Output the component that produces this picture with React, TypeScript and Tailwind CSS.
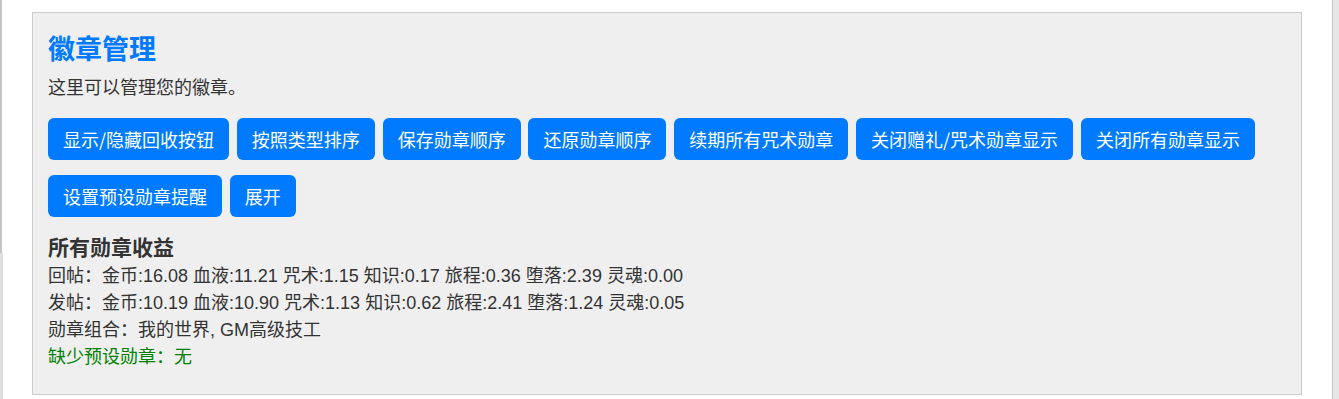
const buttons = [
    ['显示/隐藏回收按钮', '按照类型排序', '保存勋章顺序', '还原勋章顺序', '续期所有咒术勋章', '关闭赠礼/咒术勋章显示', '关闭所有勋章显示'],
    ['设置预设勋章提醒', '展开'],
];

const stats = [
    '回帖：金币:16.08 血液:11.21 咒术:1.15 知识:0.17 旅程:0.36 堕落:2.39 灵魂:0.00',
    '发帖：金币:10.19 血液:10.90 咒术:1.13 知识:0.62 旅程:2.41 堕落:1.24 灵魂:0.05',
    '勋章组合：我的世界, GM高级技工',
];

const App = () => {
    return (
        <div className="flex h-[399px] w-full overflow-hidden bg-white font-['Liberation_Sans','Noto_Sans_CJK_SC',sans-serif] text-[#333]">
            {/* left edge of the outer page */}
            <div className="flex w-[3px] flex-col">
                <div className="h-[253px] w-[2px] bg-[#c4c4c4]" />
                <div className="flex-1 bg-[#dedede]" />
            </div>

            <div className="flex-1 pl-[29px] pr-[30px] pt-[12px]">
                <div className="border border-[#cccccc] bg-[#efefef] px-[15px] pb-[23px] pt-[17px]">
                    <h2 className="text-[27px] font-bold leading-[40px] text-[#007bff]">徽章管理</h2>
                    <p className="mt-[5px] text-[18px] leading-[26px]">这里可以管理您的徽章。</p>

                    <div className="mt-[17px] flex flex-col gap-y-[15px]">
                        {buttons.map((row, i) => (
                            <div key={i} className="flex gap-x-[7.8px]">
                                {row.map(label => (
                                    <button
                                        key={label}
                                        className="h-[42px] rounded-[6px] bg-[#007bff] px-[15px] font-['Noto_Sans_CJK_SC',sans-serif] text-[18px] leading-[42px] text-white">
                                        {label}
                                    </button>
                                ))}
                            </div>
                        ))}
                    </div>

                    <h3 className="mt-[15px] font-['Noto_Sans_CJK_SC',sans-serif] text-[21px] font-bold leading-[28px]">
                        所有勋章收益
                    </h3>
                    <div className="pt-[3px]">
                        {stats.map(line => (
                            <div key={line} className="text-[18px] leading-[27px]">
                                {line}
                            </div>
                        ))}
                        <div className="text-[18px] leading-[27px] text-[#008000]">缺少预设勋章：无</div>
                    </div>
                </div>
            </div>

            {/* scrollbar strip on the right */}
            <div className="w-[7px] border-l border-[#c9c9c9] bg-[#e6e6e6]" />
        </div>
    );
};

export default App;
